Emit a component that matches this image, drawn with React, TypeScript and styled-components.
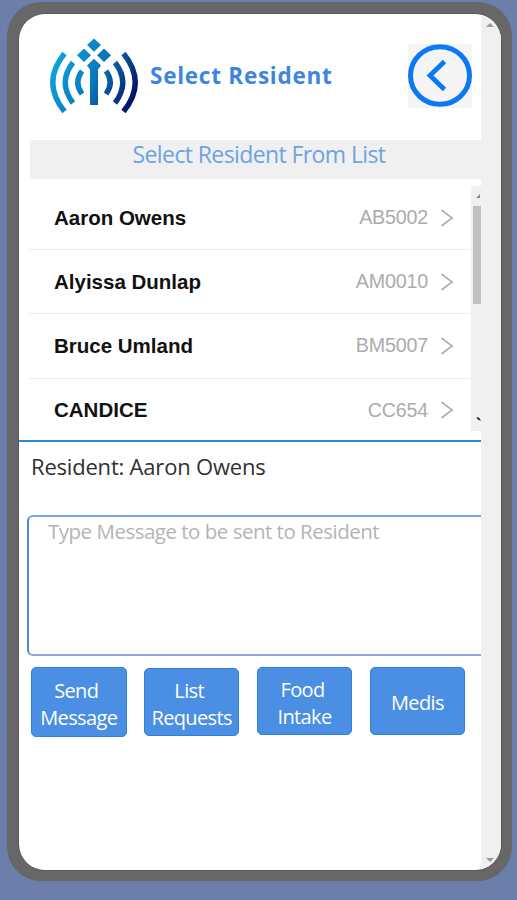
import React from "react";
import styled, { createGlobalStyle } from "styled-components";

const GlobalStyle = createGlobalStyle`
  * { box-sizing: border-box; }
  body { margin: 0; background: #6c7fab; font-family: "Open Sans", "Noto Sans", sans-serif; }
`;

const Page = styled.div`
  height: 900px;
  padding: 2px 5px 19px 7px;
  overflow: hidden;
`;

const Device = styled.div`
  height: 879px;
  padding: 12px 11px 11px 12px;
  border-radius: 34px;
  background: #676767;
`;

const Screen = styled.div`
  display: flex;
  height: 856px;
  border-radius: 26px;
  overflow: hidden;
  background: #fff;
  box-shadow: 0 0 0 1px #5a5a5a;
`;

const Content = styled.main`
  width: 462px;
  flex: none;
  overflow: hidden;
`;

const PageScroll = styled.div`
  flex: 1;
  display: flex;
  flex-direction: column;
  justify-content: space-between;
  padding: 9px 0 8px 5px;
  background: #f0f0f0;
`;

const Arrow = styled.i<{ $down?: boolean; $size: number; $color: string }>`
  display: block;
  width: 0;
  height: 0;
  border: ${(p) => p.$size}px solid transparent;
  border-top: ${(p) => (p.$down ? `${p.$size}px solid ${p.$color}` : "0")};
  border-bottom: ${(p) => (p.$down ? "0" : `${p.$size}px solid ${p.$color}`)};
`;

const Header = styled.header`
  display: flex;
  align-items: flex-start;
  height: 126px;
  padding: 24px 9px 0 30px;
`;

const Title = styled.h1`
  flex: 1;
  margin: 23px 0 0 11px;
  font-size: 22.5px;
  line-height: 29px;
  font-weight: 700;
  letter-spacing: 0.75px;
  white-space: nowrap;
  color: #3d86dc;
`;

const BackButton = styled.button`
  width: 64px;
  height: 64px;
  margin-top: 6px;
  padding: 0;
  border: 0;
  background: #f5f5f5;
`;

const Banner = styled.h2`
  height: 39px;
  margin: 0 0 0 11px;
  padding-left: 7px;
  background: #f0f0f0;
  color: #6fa2e4;
  font-size: 23px;
  line-height: 29px;
  font-weight: 400;
  text-align: center;
  letter-spacing: -0.6px;
  white-space: nowrap;
`;

const ListArea = styled.section`
  display: flex;
  height: 263px;
  padding: 7px 0 9px 10px;
  border-bottom: 2px solid #2f87d2;
`;

const List = styled.ul`
  width: 442px;
  margin: 0;
  padding: 0;
  list-style: none;
  overflow: hidden;
`;

const Row = styled.li`
  display: flex;
  align-items: center;
  height: 64.2px;
  padding: 0 17px 0 25px;
  border-bottom: 1.5px solid #ececec;
  font-family: "Liberation Sans", Arial, sans-serif;
`;

const Name = styled.span`
  flex: 1;
  font-size: 20.5px;
  font-weight: 700;
  color: #111;
`;

const Code = styled.span`
  margin-right: 12px;
  font-size: 19.7px;
  letter-spacing: -0.2px;
  color: #acacac;
`;

const ListScroll = styled.div`
  width: 10px;
  height: 245px;
  display: flex;
  flex-direction: column;
  align-items: flex-end;
  background: #f0f0f0;
`;

const Thumb = styled.div`
  width: 8px;
  height: 98px;
  margin: 5px 0 112px;
  background: #c1c1c1;
`;

const Selected = styled.p`
  height: 73px;
  margin: 0;
  padding: 9px 0 0 12px;
  font-size: 22px;
  line-height: 30px;
  letter-spacing: -0.2px;
  white-space: nowrap;
  color: #303030;
`;

const Message = styled.textarea`
  display: block;
  width: 475px;
  height: 141px;
  margin: 0 0 0 8px;
  padding: 0 19px;
  border: 2px solid #4a8be0;
  border-top-color: #7aa2e6;
  border-bottom-color: #8ba5e0;
  border-radius: 6px;
  resize: none;
  overflow: hidden;
  font-family: "Open Sans", "Noto Sans", sans-serif;
  font-size: 20.5px;
  line-height: 29px;
  letter-spacing: -0.5px;
  &::placeholder { color: #b4b4b4; opacity: 1; }
`;

const Actions = styled.div`
  display: grid;
  grid-template-columns: repeat(4, 95.5px);
  column-gap: 17.4px;
  align-items: start;
  margin: 11px 0 0 12px;
`;

const Action = styled.button<{ $top?: number; $height?: number }>`
  height: ${(p) => p.$height ?? 68}px;
  margin-top: ${(p) => p.$top ?? 0}px;
  padding: 3px 0 0;
  border: 1px solid #2f80d8;
  border-radius: 5px;
  background: #4a8fe3;
  color: #fff;
  font-family: "Open Sans", "Noto Sans", sans-serif;
  font-size: 20px;
  font-weight: 500;
  letter-spacing: -0.65px;
  line-height: 27px;
  white-space: nowrap;
`;

const Line = styled.span<{ $shift?: number }>`
  display: block;
  padding-right: ${(p) => p.$shift ?? 0}px;
`;

const Logo = () => (
  <svg width="90" height="78" viewBox="49 38 90 78" fill="none">
    <defs>
      <linearGradient id="brand" gradientUnits="userSpaceOnUse" x1="53" y1="58" x2="137" y2="98">
        <stop offset="0" stopColor="#10a5df" />
        <stop offset="0.5" stopColor="#0878bd" />
        <stop offset="0.8" stopColor="#063b83" />
        <stop offset="1" stopColor="#020a62" />
      </linearGradient>
    </defs>
    <g stroke="url(#brand)" strokeWidth="5.4">
      <path d="M64.500 53.500Q41 82.500 64.500 111.500" />
      <path d="M73 62.500Q57.500 82.500 73 103" />
      <path d="M82 71Q73.500 82.500 82 94" />
      <path d="M106 71Q114.500 82.500 106 94" />
      <path d="M115 62.500Q130.500 82.500 115 103" />
      <path d="M123.500 53.500Q147 82.500 123.500 111.500" />
    </g>
    <g fill="url(#brand)">
      <path d="M94 38.500L101 45L94 51.700L87 45Z" />
      <path d="M84 48.500L91 55.200L84 62L77 55.200Z" />
      <path d="M104 48.500L111 55.200L104 62L97 55.200Z" />
      <path d="M94 58.800L101 65.500L98 69.500V105H90V69.500L87 65.500Z" />
    </g>
  </svg>
);

const BackIcon = () => (
  <svg width="64" height="64" viewBox="0 0 64 64" fill="none" stroke="#0b79f2">
    <ellipse cx="32" cy="31.500" rx="29.500" ry="28.800" strokeWidth="5" />
    <path d="M36.500 17.500L22 31.500L36.500 45.500" strokeWidth="4.800" />
  </svg>
);

const Chevron = () => (
  <svg width="14" height="20" viewBox="0 0 14 20" fill="none" stroke="#b0b0b0" strokeWidth="1.8">
    <path d="M1.500 2L12 10L1.500 18" />
  </svg>
);

const residents = [
  { name: "Aaron Owens", code: "AB5002" },
  { name: "Alyissa Dunlap", code: "AM0010" },
  { name: "Bruce Umland", code: "BM5007" },
  { name: "CANDICE", code: "CC654" },
];

export default function App() {
  return (
    <>
      <GlobalStyle />
      <Page>
        <Device>
          <Screen>
            <Content>
              <Header>
                <Logo />
                <Title>Select Resident</Title>
                <BackButton aria-label="Back"><BackIcon /></BackButton>
              </Header>
              <Banner>Select Resident From List</Banner>
              <ListArea>
                <List>
                  {residents.map((r) => (
                    <Row key={r.code}>
                      <Name>{r.name}</Name>
                      <Code>{r.code}</Code>
                      <Chevron />
                    </Row>
                  ))}
                </List>
                <ListScroll>
                  <svg width="8" height="15" viewBox="0 0 8 15">
                    <path d="M3 12L7 8V12Z" fill="#888" />
                  </svg>
                  <Thumb />
                  <svg width="8" height="14" viewBox="0 0 8 14">
                    <path d="M3 1.500H6L8 5L5 3.500Z" fill="#222" />
                  </svg>
                </ListScroll>
              </ListArea>
              <Selected>Resident: Aaron Owens</Selected>
              <Message placeholder="Type Message to be sent to Resident" />
              <Actions>
                <Action $height={70}>
                  <Line $shift={5}>Send</Line>
                  <Line>Message</Line>
                </Action>
                <Action $top={1}>
                  <Line $shift={5}>List</Line>
                  <Line>Requests</Line>
                </Action>
                <Action>
                  <Line $shift={4}>Food</Line>
                  <Line>Intake</Line>
                </Action>
                <Action>Medis</Action>
              </Actions>
            </Content>
            <PageScroll>
              <Arrow $size={4} $color="#999" />
              <Arrow $size={4} $color="#999" $down />
            </PageScroll>
          </Screen>
        </Device>
      </Page>
    </>
  );
}
